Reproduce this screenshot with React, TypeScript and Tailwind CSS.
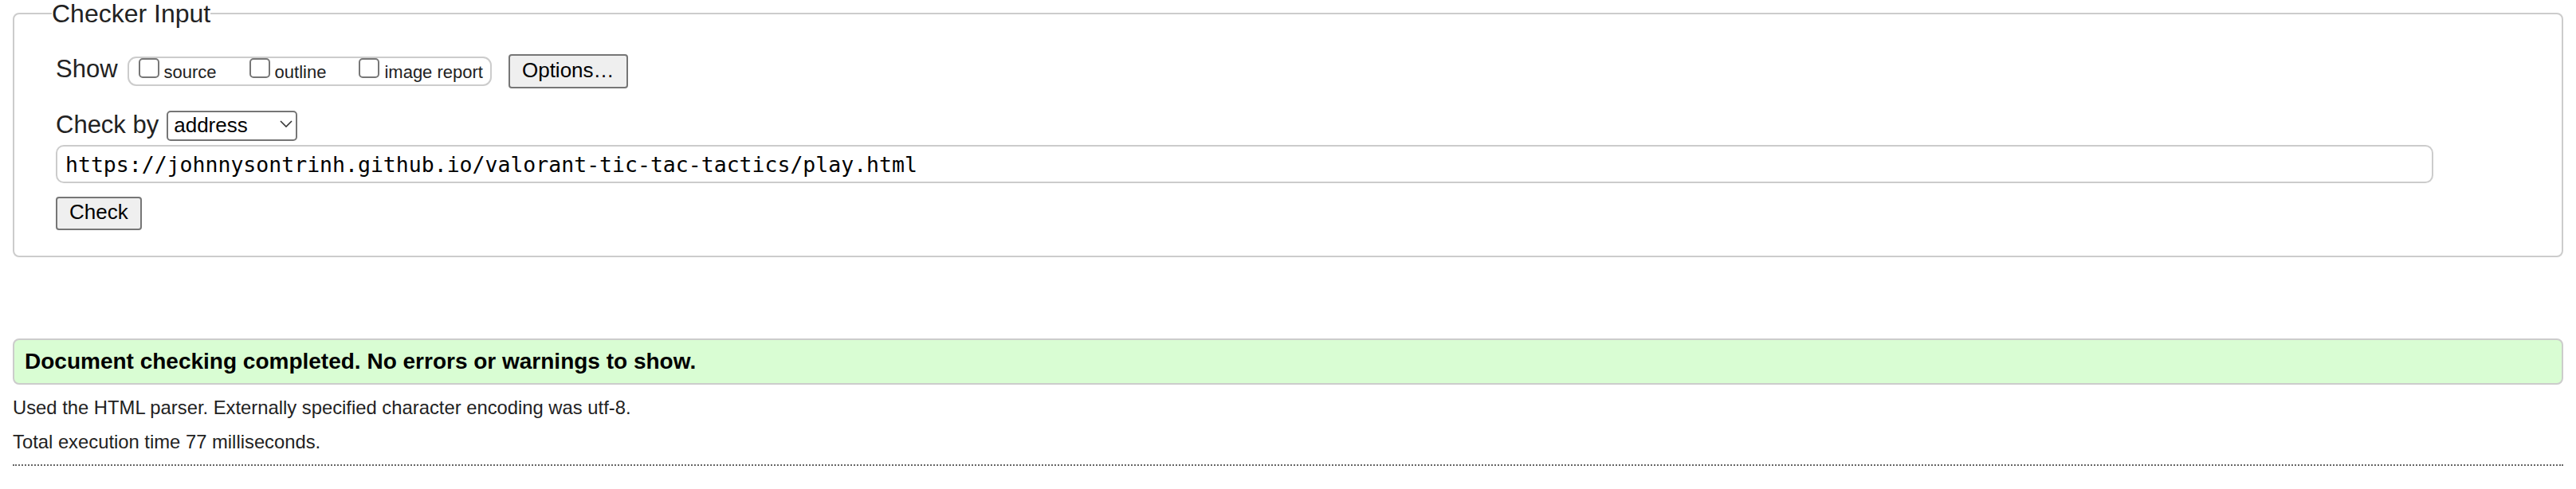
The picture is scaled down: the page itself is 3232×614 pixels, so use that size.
export default function App() {
  return (
    <div className="min-h-screen bg-white px-4 text-[#222] font-['Liberation_Sans',Arial,sans-serif]">
      {/* CHECKER INPUT */}
      <fieldset className="border-2 border-[#ccc] rounded-[8px] pl-[47px] pb-[32px]">
        <legend className="text-[32px] leading-[34px]">Checker Input</legend>

        <div className="pl-[5px]">
          {/* Show row */}
          <div className="flex items-start mt-[34px]">
            <span className="mt-[1px] text-[31px] leading-[35px]">Show</span>

            <div className="ml-[12px] mt-[3px] flex gap-[41px] border-2 border-[#ccc] rounded-[11px] pl-[12px] pr-[9px] pb-[3px] text-[22px] leading-[25px]">
              <label className="flex items-end gap-[6px]">
                <input type="checkbox" className="appearance-none w-[26px] h-[25px] mb-[5px] border-2 border-[#777] rounded-[5px] bg-white" />
                <span>source</span>
              </label>
              <label className="flex items-end gap-[6px]">
                <input type="checkbox" className="appearance-none w-[26px] h-[25px] mb-[5px] border-2 border-[#777] rounded-[5px] bg-white" />
                <span>outline</span>
              </label>
              <label className="flex items-end gap-[6px]">
                <input type="checkbox" className="appearance-none w-[26px] h-[25px] mb-[5px] border-2 border-[#777] rounded-[5px] bg-white" />
                <span>image report</span>
              </label>
            </div>

            <button className="ml-[21px] bg-[#efefef] border-2 border-[#767676] rounded-[4px] px-[15px] pt-[3px] pb-[6px] text-[26px] leading-[30px] text-black">
              Options…
            </button>
          </div>

          {/* Check by row */}
          <div className="flex items-start mt-[28px]">
            <span className="text-[31px] leading-[35px]">Check by</span>
            <div className="relative ml-[10px]">
              <select className="appearance-none w-[164px] bg-white border-2 border-[#767676] rounded-[5px] pl-[7px] pt-[1px] pb-[3px] text-[26px] leading-[30px] text-black">
                <option>address</option>
                <option>file upload</option>
                <option>text input</option>
              </select>
              <svg className="pointer-events-none absolute right-[6px] top-[12px]" width="16" height="9" viewBox="0 0 16 9" fill="none">
                <path d="M1 1 L8 8 L15 1" stroke="#333" strokeWidth="1.6" />
              </svg>
            </div>
          </div>

          {/* URL */}
          <input
            type="url"
            defaultValue="https://johnnysontrinh.github.io/valorant-tic-tac-tactics/play.html"
            className="block mt-[5px] w-[2983px] h-[48px] border-2 border-[#ccc] rounded-[10px] pl-[10px] text-[26.5px] text-black font-['DejaVu_Sans_Mono',monospace]"
          />

          <button className="block mt-[17px] bg-[#efefef] border-2 border-[#767676] rounded-[4px] px-[15px] pt-[2px] pb-[6px] text-[26px] leading-[30px] text-black">
            Check
          </button>
        </div>
      </fieldset>

      {/* RESULT */}
      <div className="mt-[102px] bg-[#d9fdd3] border-2 border-[#ccc] rounded-[8px] pl-[13px] py-[11px]">
        <h2 className="text-[28px] leading-[32px] font-bold text-black">
          Document checking completed. No errors or warnings to show.
        </h2>
      </div>

      <p className="mt-[15px] text-[23.8px] leading-[28px]">
        Used the HTML parser. Externally specified character encoding was utf-8.
      </p>
      <p className="mt-[15px] text-[23.8px] leading-[28px]">
        Total execution time 77 milliseconds.
      </p>

      <hr className="mt-[14px] border-0 border-t-2 border-dotted border-[#666]" />
    </div>
  );
}
